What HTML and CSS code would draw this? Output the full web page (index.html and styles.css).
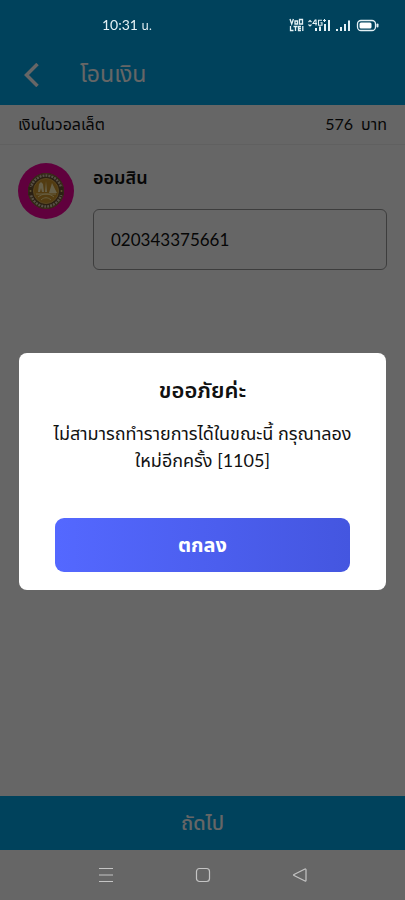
FILE: index.html
```html
<!DOCTYPE html>
<html lang="th">

<head>
    <meta charset="UTF-8">
    <meta name="viewport" content="width=device-width, initial-scale=1.0">
    <title>โอนเงิน</title>
    <link rel="stylesheet" href="styles.css">
</head>

<body>

    <div class="status-bar">
        <span class="clock">10:31 <small>น.</small></span>
        <svg class="status-icons" viewBox="0 0 92 16" width="92" height="16" fill="none" stroke="#e4f1f5">
            <!-- VoLTE -->
            <path stroke-width="1.3" d="M1 2l1.700 5L4.400 2M6 4h2.500v3H6zM10.500 2.500h3v4.500h-3zM1.500 9v4.500h3M4.500 9.500h4M6.500 9.500v4.500M12 9.500h-2.500v4H12M9.500 11.500h2.500M13.800 9v5" />
            <!-- 4G -->
            <path stroke-width="1.1" d="M19.500 5l1.500-1.500L22.500 5M19.500 7.500L21 9l1.500-1.500M26.500 2.500L24 6.500h4M27 2.500v6M33 3.200h-3.500v5H33V5.800h-1.500M34 3.500h3M35.500 2v3" />
            <path stroke-width="2" d="M27 11v3M31 9.500v4.500M36 7v7M40 3v11M48 12v2M52 10v4M56 7v7M60 3.500v10.500" />
            <!-- battery -->
            <rect x="68.500" y="3.500" width="18" height="10" rx="3.500" stroke-width="1.300" />
            <rect x="70.500" y="5.500" width="12" height="6" rx="1.500" fill="#fff" stroke="none" />
            <path stroke-width="2" stroke-linecap="round" d="M88.500 7.500v2" />
        </svg>
    </div>

    <div class="app">
        <header class="header">
            <button class="back" type="button" aria-label="ย้อนกลับ">
                <svg viewBox="0 0 16 24" width="16" height="24" fill="none" stroke="#fff" stroke-width="3.500">
                    <path d="M13.500 1L2.500 12l11 11" />
                </svg>
            </button>
            <h1>โอนเงิน</h1>
        </header>

        <div class="balance">
            <span>เงินในวอลเล็ต</span>
            <span class="amount">576 <span>บาท</span></span>
        </div>

        <main class="account">
            <svg class="bank-logo" viewBox="0 0 56 56" width="56" height="56">
                <circle cx="28" cy="28" r="28" fill="#f0009a" />
                <circle cx="28" cy="28" r="18" fill="#6b5030" />
                <circle cx="28" cy="28" r="15.500" fill="none" stroke="#d8c9ad" stroke-width="2.500" stroke-dasharray="2 1" />
                <circle cx="28" cy="28" r="17.500" fill="none" stroke="#9a7840" />
                <path d="M10.500 24h4v8h-4zM41.500 24h4v8h-4z" fill="#6b5030" />
                <circle cx="12.500" cy="28" r="1" fill="#f0d27a" />
                <circle cx="43.500" cy="28" r="1" fill="#f0d27a" />
                <circle cx="28" cy="28" r="12.500" fill="#cf962c" stroke="#e0b050" />
                <path d="M21 21l2-2 2 2 1 8h-2l-1-4-1 4h-2zM34 20l5 10h-8zM28 18l1 11h-2z" fill="#fff0b8" />
                <path d="M18 31h20M20 34c5-4 11-4 16 0M23 37c3-3 7-3 10 0" fill="none" stroke="#ffe9a0" />
            </svg>
            <div class="field">
                <label for="account-number">ออมสิน</label>
                <input id="account-number" type="text" inputmode="numeric" value="020343375661">
            </div>
        </main>

        <button class="next" type="button">ถัดไป</button>
    </div>

    <div class="overlay">
        <div class="modal" role="alertdialog" aria-labelledby="modal-title" aria-describedby="modal-text">
            <h2 id="modal-title">ขออภัยค่ะ</h2>
            <p id="modal-text">ไม่สามารถทำรายการได้ในขณะนี้ กรุณาลอง<br>ใหม่อีกครั้ง [1105]</p>
            <button class="ok" type="button">ตกลง</button>
        </div>
    </div>

    <nav class="system-nav">
        <button type="button" aria-label="เมนู">
            <svg viewBox="0 0 16 16" width="16" height="16"><path d="M1 1.500h14M1 8h14M1 14.500h14" /></svg>
        </button>
        <button type="button" aria-label="หน้าหลัก">
            <svg viewBox="0 0 16 16" width="16" height="16"><rect x="1.500" y="1.500" width="13" height="13" rx="3" /></svg>
        </button>
        <button type="button" aria-label="กลับ">
            <svg viewBox="0 0 16 16" width="16" height="16"><path d="M13 2L2 7.500q-1 .5 0 1L13 14q1 .3 1-.8V2.800q0-1-1-.8z" /></svg>
        </button>
    </nav>

</body>

</html>
```
FILE: styles.css
```css
* {
    box-sizing: border-box;
}

body {
    margin: 0;
    font-family: Lato, "Noto Sans Thai", "Noto Sans Thai Looped", "Noto Sans", sans-serif;
    font-size: 16px;
    color: #111;
    background-color: #fff;
}

h1, h2, p {
    margin: 0;
}

button {
    border: 0;
    padding: 0;
    font-family: inherit;
    background: none;
    cursor: pointer;
}

svg {
    display: block;
}

.app {
    display: flex;
    flex-direction: column;
    min-height: 100vh;
    padding: 48px 0 50px;
}

/* system bars stay above the overlay */
.status-bar {
    position: fixed;
    top: 0;
    left: 0;
    right: 0;
    z-index: 3;
    display: flex;
    justify-content: space-between;
    align-items: center;
    height: 50px;
    padding: 0 24px 0 102px;
    color: #e4f1f5;
}

.clock {
    font-size: 14px;
}

.clock small {
    font-size: 12px;
}

.header {
    display: flex;
    align-items: center;
    gap: 40px;
    height: 105px;
    margin-top: -48px;
    padding: 44px 24px 0;
    background-color: #00a5e6;
    color: #fff;
}

.header h1 {
    font-size: 23px;
    font-weight: 400;
}

.balance {
    display: flex;
    justify-content: space-between;
    align-items: center;
    height: 40px;
    padding: 0 18px;
    border-bottom: 1px solid #f0f0f0;
}

.amount span {
    margin-left: 4px;
}

.account {
    display: flex;
    flex: 1;
    align-items: flex-start;
    gap: 19px;
    padding: 18px;
}

.bank-logo {
    flex: none;
}

.field {
    flex: 1;
    min-width: 0;
}

.field label {
    display: block;
    height: 46px;
    line-height: 28px;
    font-size: 18px;
    font-weight: 600;
}

.field input {
    display: block;
    width: 100%;
    height: 61px;
    padding: 0 17px;
    border: 1px solid #999;
    border-radius: 6px;
    font-family: inherit;
    font-size: 17px;
    color: #111;
    background-color: #fff;
}

.next {
    height: 54px;
    padding-top: 2px;
    background-color: #00a5e6;
    color: #fff;
    font-size: 20px;
    font-weight: 500;
}

.overlay {
    position: fixed;
    inset: 0;
    z-index: 2;
    display: flex;
    justify-content: center;
    align-items: center;
    padding: 43px 19px 0;
    background-color: rgba(0, 0, 0, 0.6);
}

.modal {
    width: 100%;
    padding: 20px 16px 18px;
    border-radius: 8px;
    background-color: #fff;
    text-align: center;
}

.modal h2 {
    line-height: 34px;
    font-size: 22px;
    font-weight: 600;
}

.modal p {
    margin-top: 13px;
    line-height: 27px;
    font-size: 18px;
}

.ok {
    display: block;
    width: calc(100% - 40px);
    height: 54px;
    margin: 44px auto 0;
    padding-top: 2px;
    border-radius: 9px;
    background-image: linear-gradient(to right, #5468ff, #4456e0);
    color: #fff;
    font-size: 20px;
    font-weight: 700;
}

.system-nav {
    position: fixed;
    left: 0;
    right: 0;
    bottom: 0;
    z-index: 3;
    display: flex;
    justify-content: center;
    align-items: center;
    gap: 81px;
    height: 50px;
}

.system-nav svg {
    fill: none;
    stroke: #c4c4c4;
    stroke-width: 1.2;
}
```
